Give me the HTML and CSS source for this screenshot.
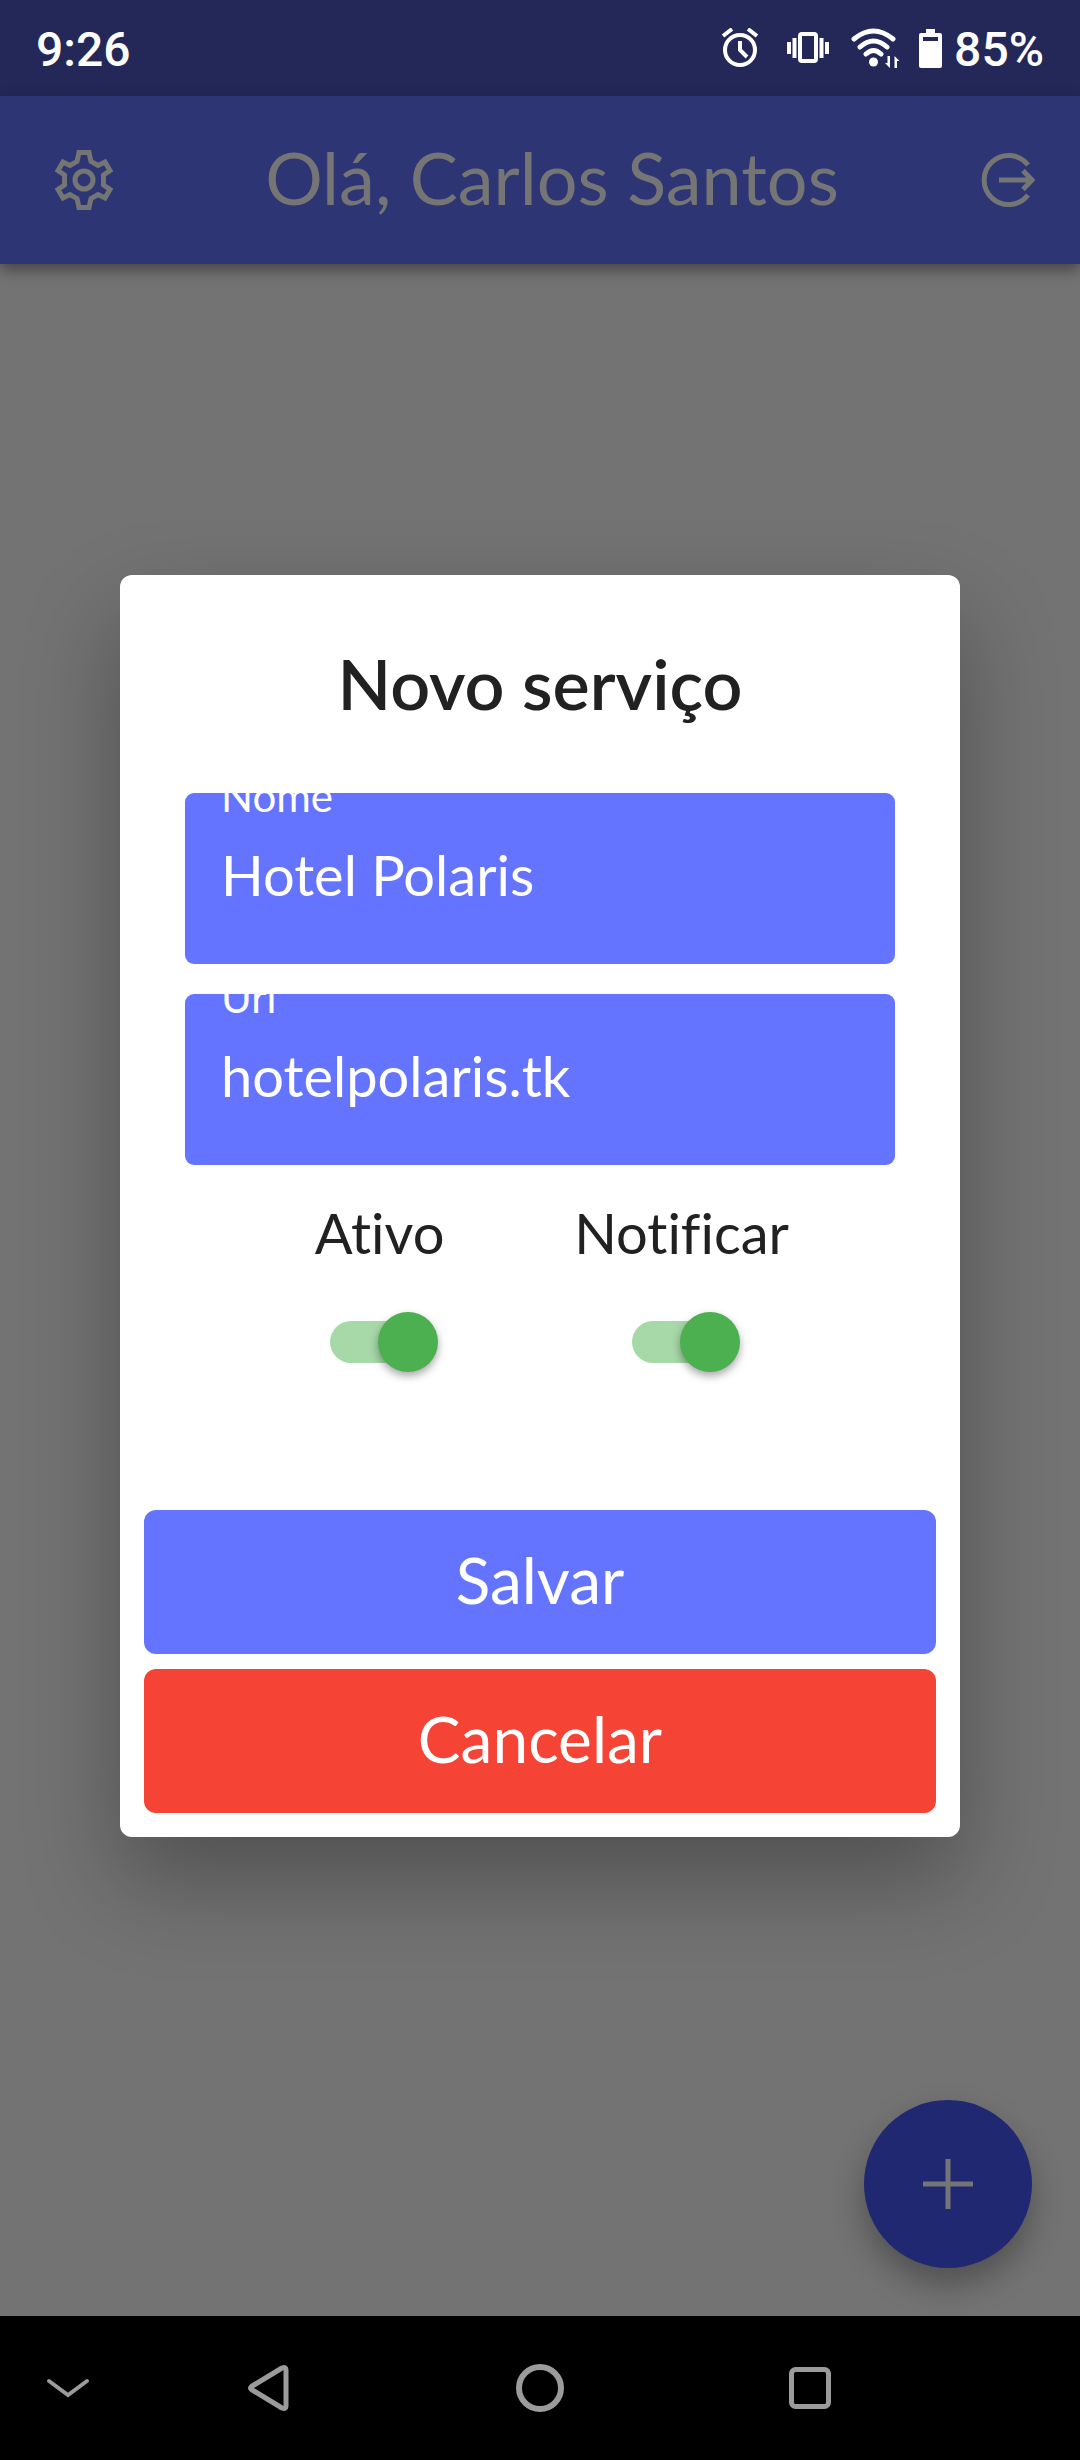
FILE: index.html
```html
<!DOCTYPE html>
<html lang="pt-BR">
<head>
<meta charset="utf-8">
<meta name="viewport" content="width=device-width, initial-scale=1">
<title>Novo serviço</title>
<link rel="stylesheet" href="styles.css">
</head>
<body>
<div class="status-bar">
  <span class="clock">9:26</span>
  <div class="status-icons">
    <svg class="icon-alarm" width="38" height="40" viewBox="0 0 38 40" fill="none" stroke="#fff" stroke-width="4">
      <circle cx="19" cy="22" r="15"/><path d="M2 8l9-7M36 8l-9-7M19 13v9l7 7"/>
    </svg>
    <svg class="icon-vibrate" width="42" height="40" viewBox="0 0 42 40" fill="none" stroke="#fff" stroke-width="4">
      <rect x="13" y="6" width="16" height="27" rx="2"/><path d="M2 14v12M7.500 10v20M34.500 10v20M40 14v12"/>
    </svg>
    <svg class="icon-wifi" width="50" height="40" viewBox="0 0 50 40" fill="none" stroke="#fff" stroke-width="5" stroke-linecap="round">
      <path d="M3 11q19.500-16 39 0M9 19q13.500-12 27 0M15 26q7.500-7 15 0"/>
      <circle cx="22.500" cy="34" r="4.500" fill="#fff" stroke="none"/>
      <path fill="#fff" stroke="none" d="M36.500 28h2.500v12l-5-5h2.500zM43.500 40h2.500v-7h2.500l-5-5z"/>
    </svg>
    <svg class="icon-battery" width="23" height="40" viewBox="0 0 23 40" fill="#fff">
      <path fill-rule="evenodd" d="M7 1h9v4h5q2 0 2 2v31q0 2-2 2H2q-2 0-2-2V7q0-2 2-2h5zM4 9v4h15V9z"/>
    </svg>
    <span class="battery-level">85%</span>
  </div>
</div>

<main class="screen">
  <header class="app-bar">
    <button class="bar-button settings" type="button" aria-label="Configurações">
      <svg width="60" height="60" viewBox="-30 -30 60 60" fill="none" stroke="currentColor" stroke-width="5">
        <path d="M-5-27.500H5L7-18.500 14-14.500 21-18 26-9.500 19.500-5V5L26 9.500 21 18 14 14.500 7 18.500 5 27.500H-5L-7 18.500-14 14.500-21 18-26 9.500-19.500 5V-5L-26-9.500-21-18-14-14.500-7-18.500z"/>
        <circle r="9"/>
      </svg>
    </button>
    <h1 class="greeting">Olá, Carlos Santos</h1>
    <button class="bar-button logout" type="button" aria-label="Sair">
      <svg width="60" height="60" viewBox="-30 -30 60 60" fill="none" stroke="currentColor" stroke-width="5">
        <path d="M20-15A24.500 24.500 0 1 0 20 15M-9 0H23M15-9.500L24 0 15 9.500"/>
      </svg>
    </button>
  </header>

  <button class="fab" type="button" aria-label="Adicionar serviço">
    <svg width="52" height="52" viewBox="0 0 52 52" stroke="currentColor" stroke-width="5"><path d="M26 1v50M1 26h50"/></svg>
  </button>

  <div class="overlay">
    <form class="dialog" role="dialog" aria-labelledby="dialog-title">
      <h2 class="dialog-title" id="dialog-title">Novo serviço</h2>
      <div class="fields">
        <div class="field">
          <label for="name">Nome</label>
          <input id="name" type="text" value="Hotel Polaris">
        </div>
        <div class="field">
          <label for="url">Url</label>
          <input id="url" type="text" value="hotelpolaris.tk">
        </div>
      </div>
      <div class="toggles">
        <div class="toggle">
          <label for="active">Ativo</label>
          <input class="switch" id="active" type="checkbox" role="switch" checked>
        </div>
        <div class="toggle">
          <label for="notify">Notificar</label>
          <input class="switch" id="notify" type="checkbox" role="switch" checked>
        </div>
      </div>
      <div class="actions">
        <button class="action save" type="button">Salvar</button>
        <button class="action cancel" type="button">Cancelar</button>
      </div>
    </form>
  </div>
</main>

<nav class="system-nav">
  <button type="button" aria-label="Ocultar barra">
    <svg width="44" height="24" viewBox="0 0 44 24" fill="none" stroke="currentColor" stroke-width="4" stroke-linecap="round"><path d="M3 5l19 14L41 5"/></svg>
  </button>
  <button type="button" aria-label="Voltar">
    <svg width="44" height="48" viewBox="0 0 44 48" fill="none" stroke="currentColor" stroke-width="5" stroke-linejoin="round"><path d="M3.500 22.500L34 4q4-1.500 4 2v36q0 3.500-4 2L3.500 25.500q-2-1.500 0-3z"/></svg>
  </button>
  <button type="button" aria-label="Início">
    <svg width="48" height="48" viewBox="0 0 48 48" fill="none" stroke="currentColor" stroke-width="6"><circle cx="24" cy="24" r="21"/></svg>
  </button>
  <button type="button" aria-label="Recentes">
    <svg width="44" height="44" viewBox="0 0 44 44" fill="none" stroke="currentColor" stroke-width="5"><rect x="3.500" y="3.500" width="37" height="37" rx="4"/></svg>
  </button>
</nav>
</body>
</html>
```
FILE: styles.css
```css
* {
  box-sizing: border-box;
}

body {
  margin: 0;
  min-height: 100vh;
  display: flex;
  flex-direction: column;
  background: #737373;
  font-family: Lato, "Noto Sans", sans-serif;
}

button {
  margin: 0;
  padding: 0;
  border: 0;
  background: none;
  color: inherit;
  font: inherit;
}

h1,
h2 {
  margin: 0;
}

svg {
  display: block;
}

/* System status bar */
.status-bar {
  display: flex;
  align-items: center;
  justify-content: space-between;
  height: 96px;
  padding: 0 36px;
  background: #232858;
  color: #fff;
  font: 500 48px/56px Roboto, sans-serif;
}

.clock,
.battery-level {
  padding-top: 4px;
}

.status-icons {
  display: flex;
  align-items: center;
}

.icon-alarm {
  margin-right: 28px;
}

.icon-vibrate {
  margin-right: 22px;
}

.icon-wifi {
  margin-right: 18px;
}

.icon-battery {
  margin-right: 12px;
}

/* Page behind the dialog */
.screen {
  position: relative;
  flex: 1;
  display: flex;
  flex-direction: column;
}

.app-bar {
  display: flex;
  align-items: center;
  height: 168px;
  background: #2e3574;
  color: #757575;
  box-shadow: 0 6px 14px rgba(0, 0, 0, 0.4);
}

.bar-button {
  display: grid;
  place-items: center;
  height: 100%;
}

.settings {
  width: 168px;
}

.logout {
  width: 144px;
}

.greeting {
  flex: 1;
  padding-bottom: 6px;
  text-align: center;
  font-size: 72px;
  line-height: 84px;
  font-weight: 400;
}

.fab {
  position: absolute;
  right: 48px;
  bottom: 48px;
  display: grid;
  place-items: center;
  width: 168px;
  height: 168px;
  border-radius: 50%;
  background: #212872;
  color: #757575;
  box-shadow: 0 16px 32px rgba(0, 0, 0, 0.3);
}

/* Dialog */
.overlay {
  position: absolute;
  inset: 0;
  display: flex;
  align-items: center;
  padding: 0 120px;
}

.dialog {
  width: 100%;
  padding: 66px 24px 24px;
  border-radius: 12px;
  background: #fff;
  color: #212121;
  box-shadow: 0 44px 96px rgba(0, 0, 0, 0.3);
}

.dialog-title {
  text-align: center;
  font-size: 70px;
  line-height: 84px;
  font-weight: 600;
}

.fields {
  display: flex;
  flex-direction: column;
  gap: 30px;
  padding: 68px 41px 34px;
}

.field {
  height: 171px;
  padding: 0 36px;
  border-radius: 9px;
  background: #6574ff;
  color: #fff;
  overflow: hidden;
}

.field label {
  display: block;
  margin: -22px 0 20px;
  font-size: 42px;
  line-height: 50px;
}

.field input {
  display: block;
  width: 100%;
  height: 68px;
  padding: 0;
  border: 0;
  outline: 0;
  background: none;
  color: inherit;
  font: inherit;
  font-size: 56px;
  line-height: 68px;
}

.toggles {
  display: flex;
  justify-content: space-evenly;
  padding: 0 41px;
}

.toggle {
  display: flex;
  flex-direction: column;
  align-items: center;
  gap: 45px;
  min-width: 177px;
  font-size: 56px;
  line-height: 68px;
  font-variant-ligatures: none;
}

.switch {
  appearance: none;
  position: relative;
  display: flex;
  align-items: center;
  width: 99px;
  height: 60px;
  margin: 0;
}

.switch::before {
  content: "";
  width: 100%;
  height: 42px;
  border-radius: 21px;
  background: #a6d8a8;
}

.switch::after {
  content: "";
  position: absolute;
  top: 0;
  left: -9px;
  width: 60px;
  height: 60px;
  border-radius: 50%;
  background: #4caf50;
  box-shadow: 0 4px 8px rgba(0, 0, 0, 0.35);
}

.switch:checked::after {
  left: auto;
  right: -9px;
}

.actions {
  display: flex;
  flex-direction: column;
  gap: 15px;
  padding-top: 138px;
}

.action {
  height: 144px;
  padding-bottom: 4px;
  border-radius: 12px;
  color: #fff;
  font-size: 64px;
  line-height: 76px;
}

.save {
  background: #6574ff;
}

.cancel {
  background: #f54336;
}

/* System navigation */
.system-nav {
  position: relative;
  display: grid;
  grid-template-columns: 1fr 2fr 2fr 2fr 1fr;
  height: 144px;
  background: #000;
  color: #9b9b9b;
}

.system-nav button {
  display: grid;
  place-items: center;
}
```
